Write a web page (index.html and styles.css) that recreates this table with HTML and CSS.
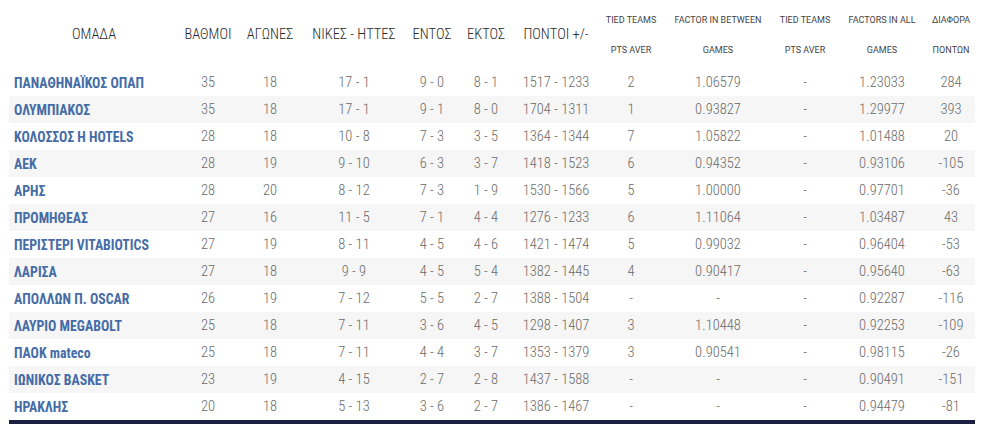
FILE: index.html
```html
<!DOCTYPE html>
<html lang="el">
<head>
<meta charset="utf-8">
<title>Βαθμολογία</title>
<link rel="stylesheet" href="styles.css">
</head>
<body>
<div class="wrap">
<table class="standings">
<colgroup>
<col class="c-team"><col class="c-58"><col class="c-66"><col class="c-102"><col class="c-54"><col class="c-54"><col class="c-86"><col class="c-64"><col class="c-110"><col class="c-64"><col class="c-90"><col class="c-48">
</colgroup>
<thead>
<tr>
<th>ΟΜΑΔΑ</th>
<th>ΒΑΘΜΟΙ</th>
<th>ΑΓΩΝΕΣ</th>
<th>ΝΙΚΕΣ - ΗΤΤΕΣ</th>
<th>ΕΝΤΟΣ</th>
<th>ΕΚΤΟΣ</th>
<th>ΠΟΝΤΟΙ +/-</th>
<th class="small">TIED TEAMS<br>PTS AVER</th>
<th class="small">FACTOR IN BETWEEN<br>GAMES</th>
<th class="small">TIED TEAMS<br>PTS AVER</th>
<th class="small">FACTORS IN ALL<br>GAMES</th>
<th class="small">ΔΙΑΦΟΡΑ<br>ΠΟΝΤΩΝ</th>
</tr>
</thead>
<tbody>
<tr><td class="team">ΠΑΝΑΘΗΝΑΪΚΟΣ ΟΠΑΠ</td><td>35</td><td>18</td><td>17 - 1</td><td>9 - 0</td><td>8 - 1</td><td>1517 - 1233</td><td>2</td><td>1.06579</td><td>-</td><td>1.23033</td><td>284</td></tr>
<tr><td class="team">ΟΛΥΜΠΙΑΚΟΣ</td><td>35</td><td>18</td><td>17 - 1</td><td>9 - 1</td><td>8 - 0</td><td>1704 - 1311</td><td>1</td><td>0.93827</td><td>-</td><td>1.29977</td><td>393</td></tr>
<tr><td class="team">ΚΟΛΟΣΣΟΣ H HOTELS</td><td>28</td><td>18</td><td>10 - 8</td><td>7 - 3</td><td>3 - 5</td><td>1364 - 1344</td><td>7</td><td>1.05822</td><td>-</td><td>1.01488</td><td>20</td></tr>
<tr><td class="team">ΑΕΚ</td><td>28</td><td>19</td><td>9 - 10</td><td>6 - 3</td><td>3 - 7</td><td>1418 - 1523</td><td>6</td><td>0.94352</td><td>-</td><td>0.93106</td><td>-105</td></tr>
<tr><td class="team">ΑΡΗΣ</td><td>28</td><td>20</td><td>8 - 12</td><td>7 - 3</td><td>1 - 9</td><td>1530 - 1566</td><td>5</td><td>1.00000</td><td>-</td><td>0.97701</td><td>-36</td></tr>
<tr><td class="team">ΠΡΟΜΗΘΕΑΣ</td><td>27</td><td>16</td><td>11 - 5</td><td>7 - 1</td><td>4 - 4</td><td>1276 - 1233</td><td>6</td><td>1.11064</td><td>-</td><td>1.03487</td><td>43</td></tr>
<tr><td class="team">ΠΕΡΙΣΤΕΡΙ VITABIOTICS</td><td>27</td><td>19</td><td>8 - 11</td><td>4 - 5</td><td>4 - 6</td><td>1421 - 1474</td><td>5</td><td>0.99032</td><td>-</td><td>0.96404</td><td>-53</td></tr>
<tr><td class="team">ΛΑΡΙΣΑ</td><td>27</td><td>18</td><td>9 - 9</td><td>4 - 5</td><td>5 - 4</td><td>1382 - 1445</td><td>4</td><td>0.90417</td><td>-</td><td>0.95640</td><td>-63</td></tr>
<tr><td class="team">ΑΠΟΛΛΩΝ Π. OSCAR</td><td>26</td><td>19</td><td>7 - 12</td><td>5 - 5</td><td>2 - 7</td><td>1388 - 1504</td><td>-</td><td>-</td><td>-</td><td>0.92287</td><td>-116</td></tr>
<tr><td class="team">ΛΑΥΡΙΟ MEGABOLT</td><td>25</td><td>18</td><td>7 - 11</td><td>3 - 6</td><td>4 - 5</td><td>1298 - 1407</td><td>3</td><td>1.10448</td><td>-</td><td>0.92253</td><td>-109</td></tr>
<tr><td class="team">ΠΑΟΚ mateco</td><td>25</td><td>18</td><td>7 - 11</td><td>4 - 4</td><td>3 - 7</td><td>1353 - 1379</td><td>3</td><td>0.90541</td><td>-</td><td>0.98115</td><td>-26</td></tr>
<tr><td class="team">ΙΩΝΙΚΟΣ BASKET</td><td>23</td><td>19</td><td>4 - 15</td><td>2 - 7</td><td>2 - 8</td><td>1437 - 1588</td><td>-</td><td>-</td><td>-</td><td>0.90491</td><td>-151</td></tr>
<tr><td class="team">ΗΡΑΚΛΗΣ</td><td>20</td><td>18</td><td>5 - 13</td><td>3 - 6</td><td>2 - 7</td><td>1386 - 1467</td><td>-</td><td>-</td><td>-</td><td>0.94479</td><td>-81</td></tr>
</tbody>
</table>
</div>
</body>
</html>
```
FILE: styles.css
```css
html, body {
  margin: 0;
  padding: 0;
  background: #ffffff;
}
.wrap {
  padding: 0 7px 0 9px;
}
.standings {
  width: 966px;
  table-layout: fixed;
  border-collapse: collapse;
  font-family: "Roboto", "Liberation Sans", sans-serif;
  font-stretch: 75%;
  border-bottom: 4px solid #1b2040;
}
.c-team { width: 170px; }
.c-58 { width: 58px; }
.c-66 { width: 66px; }
.c-102 { width: 102px; }
.c-54 { width: 54px; }
.c-86 { width: 86px; }
.c-64 { width: 64px; }
.c-110 { width: 110px; }
.c-90 { width: 90px; }
.c-48 { width: 48px; }

.standings th {
  height: 69px;
  padding: 0;
  font-size: 14.5px;
  font-weight: 300;
  color: #2a2a2a;
  text-align: center;
  white-space: nowrap;
  vertical-align: middle;
}
.standings th.small {
  font-size: 9px;
  font-weight: 400;
  font-stretch: 100%;
  line-height: 30px;
  color: #444444;
}
.standings td {
  height: 27px;
  padding: 0;
  font-size: 14.5px;
  font-weight: 300;
  color: #6a6a6a;
  text-align: center;
  white-space: nowrap;
  vertical-align: middle;
}
.standings tbody tr:nth-child(even) {
  background: #f6f6f6;
}
.standings td.team {
  text-align: left;
  padding-left: 5px;
  font-size: 13.8px;
  font-weight: 700;
  color: #456ca6;
}
```
